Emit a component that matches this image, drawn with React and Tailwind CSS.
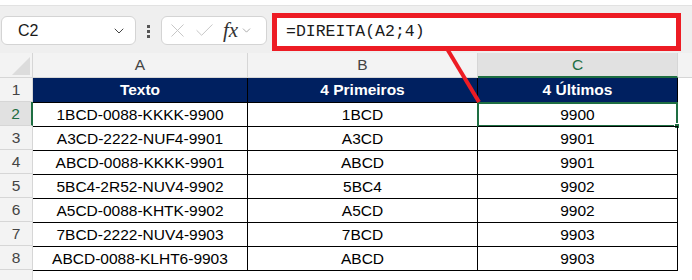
import React from 'react';
import { ChevronDown, X, Check } from 'lucide-react';

const rows = [
    ['1BCD-0088-KKKK-9900', '1BCD', '9900'],
    ['A3CD-2222-NUF4-9901', 'A3CD', '9901'],
    ['ABCD-0088-KKKK-9901', 'ABCD', '9901'],
    ['5BC4-2R52-NUV4-9902', '5BC4', '9902'],
    ['A5CD-0088-KHTK-9902', 'A5CD', '9902'],
    ['7BCD-2222-NUV4-9903', '7BCD', '9903'],
    ['ABCD-0088-KLHT6-9903', 'ABCD', '9903'],
];

const App = () => {
    return (
        <div className="relative w-[692px] h-[280px] overflow-hidden bg-white text-[#222]" style={{ fontFamily: '"Liberation Sans", Arial, sans-serif' }}>
            {/* top strip */}
            <div className="h-[6px] bg-white border-b border-[#e2e2e2]" />

            {/* formula toolbar */}
            <div className="h-[47px] bg-[#efefef] flex items-start">
                <div className="ml-[1px] mt-[10px] w-[135px] h-[29px] bg-white border border-[#d4d4d4] rounded-md flex items-center pl-[16px] pr-[8px]">
                    <span className="text-[16px] text-[#1a1a1a]">C2</span>
                    <ChevronDown className="ml-auto text-[#444]" size={16} strokeWidth={1.5} />
                </div>
                <div className="ml-[11px] mt-[19px] flex flex-col gap-[2px]">
                    <div className="w-[3px] h-[3px] bg-[#555]" />
                    <div className="w-[3px] h-[3px] bg-[#555]" />
                    <div className="w-[3px] h-[3px] bg-[#555]" />
                </div>
                <div className="ml-[11px] mt-[10px] w-[106px] h-[29px] bg-white border border-[#d4d4d4] rounded-md flex items-center pl-[4px]">
                    <X className="text-[#c4c4c4]" size={23} strokeWidth={1} />
                    <Check className="ml-[4px] text-[#c4c4c4]" size={23} strokeWidth={1} />
                    <span className="ml-[7px] text-[21px] italic text-[#333] leading-none" style={{ fontFamily: '"Liberation Serif", "Times New Roman", serif' }}>fx</span>
                    <ChevronDown className="ml-[2px] text-[#999]" size={13} strokeWidth={1.5} />
                </div>
                <div className="ml-[5px] mt-[7px] w-[409px] h-[38px] bg-white border-[5px] border-[#ed1c24] flex items-center pl-[9px]">
                    <span className="text-[16.5px] text-[#1a1a1a]" style={{ fontFamily: '"Liberation Mono", "Courier New", monospace' }}>=DIREITA(A2;4)</span>
                </div>
            </div>

            {/* sheet grid */}
            <div className="grid grid-cols-[33px_215px_230px_200px_14px] text-[15.5px]">
                {/* column headers */}
                <div className="h-[25px] bg-[#f3f3f3] border-b border-r border-[#d6d6d6] relative">
                    <svg className="absolute right-[2px] bottom-[2px]" width="18" height="18" viewBox="0 0 18 18">
                        <polygon points="18,0 18,18 0,18" fill="#dcdcdc" />
                    </svg>
                </div>
                <div className="h-[25px] bg-[#f3f3f3] border-b border-r border-[#d6d6d6] flex items-center justify-center text-[#444]">A</div>
                <div className="h-[25px] bg-[#f3f3f3] border-b border-r border-[#d6d6d6] flex items-center justify-center text-[#444]">B</div>
                <div className="h-[25px] bg-[#e1e1e1] border-b-2 border-r border-b-[#1e6e42] border-r-[#d6d6d6] flex items-center justify-center text-[#1e6e42]">C</div>
                <div className="h-[25px] bg-[#f3f3f3] border-b border-[#d6d6d6]" />

                {/* header row 1 */}
                <div className="h-[24px] bg-[#f3f3f3] border-b border-r border-[#d6d6d6] flex items-center justify-center text-[#444]">1</div>
                <div className="h-[24px] bg-[#002060] border-r border-black flex items-center justify-center text-white font-bold">Texto</div>
                <div className="h-[24px] bg-[#002060] border-r border-black flex items-center justify-center text-white font-bold">4 Primeiros</div>
                <div className="h-[24px] bg-[#002060] border-r border-black flex items-center justify-center text-white font-bold">4 Últimos</div>
                <div className="h-[24px]" />

                {rows.map((r, i) => {
                    const selected = i === 0;
                    return (
                        <React.Fragment key={i}>
                            <div
                                className={
                                    selected
                                        ? 'h-[24px] bg-[#e1e1e1] border-b border-[#d6d6d6] border-r-2 border-r-[#1e6e42] flex items-center justify-center text-[#1e6e42]'
                                        : 'h-[24px] bg-[#f3f3f3] border-b border-r border-[#d6d6d6] flex items-center justify-center text-[#444]'
                                }
                            >
                                {i + 2}
                            </div>
                            <div className="h-[24px] border-t border-r border-black flex items-center justify-center text-black">{r[0]}</div>
                            <div className="h-[24px] border-t border-r border-black flex items-center justify-center text-black">{r[1]}</div>
                            <div className="relative h-[24px] border-t border-r border-black flex items-center justify-center text-black">
                                {r[2]}
                                {selected && (
                                    <div className="absolute -left-[1px] -top-[1px] -right-[1px] -bottom-[1px] border-2 border-[#1e6e42]">
                                        <div className="absolute -right-[4px] -bottom-[4px] w-[6px] h-[6px] bg-[#1e6e42] border border-white" />
                                    </div>
                                )}
                            </div>
                            <div className="h-[24px]" />
                        </React.Fragment>
                    );
                })}

                {/* row 9 (cut off at the bottom edge, as in the screenshot) */}
                <div className="h-[24px] bg-[#f3f3f3] border-r border-[#d6d6d6] flex items-start justify-center pt-[4px] text-[#444]">9</div>
                <div className="h-[24px] border-t border-black" />
                <div className="h-[24px] border-t border-black" />
                <div className="h-[24px] border-t border-black" />
                <div className="h-[24px]" />
            </div>

            {/* red annotation line */}
            <svg className="absolute left-0 top-0 pointer-events-none" width="692" height="280">
                <line x1="446" y1="47" x2="479" y2="102" stroke="#ed1c24" strokeWidth="4" />
            </svg>
        </div>
    );
};

export default App;
